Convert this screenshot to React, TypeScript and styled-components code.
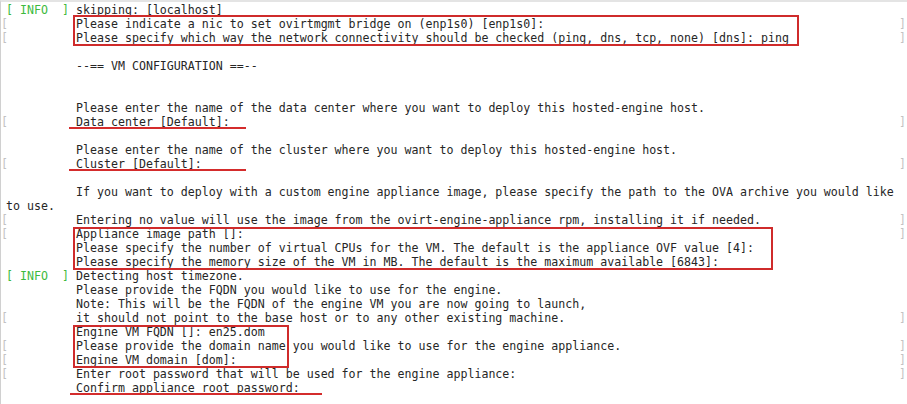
import React from 'react';
import styled, { createGlobalStyle } from 'styled-components';

const Global = createGlobalStyle`
  html, body { margin: 0; padding: 0; background: #ffffff; overflow: hidden; }
`;

const Terminal = styled.div`
  width: 907px;
  height: 404px;
  box-sizing: border-box;
  border-top: 2px solid #e4e4e4;
  border-left: 1px solid #d0d0d0;
  padding-top: 1px;
  background: #ffffff;
  font-family: "DejaVu Sans Mono", "Liberation Mono", monospace;
  font-size: 11.62px;
  line-height: 14px;
  color: #262626;
  overflow: hidden;
`;

const Row = styled.div`
  display: grid;
  grid-template-columns: 75px 823px 7px;
  height: 14px;
  white-space: pre;
`;

const Gutter = styled.span`
  grid-column: 1;
`;

const Info = styled.span`
  color: #3dba3d;
  padding-left: 5px;
`;

const Ghost = styled.span`
  color: #c2c2c2;
`;

const Text = styled.span<{ $full?: boolean }>`
  grid-column: ${(p) => (p.$full ? '1 / 3' : '2')};
  padding-left: ${(p) => (p.$full ? '5px' : '0')};
`;

const Tail = styled.span`
  grid-column: 3;
  color: #c2c2c2;
`;

const Framed = styled.div<{ $w: number; $top: number }>`
  position: relative;
  &::after {
    content: '';
    position: absolute;
    box-sizing: border-box;
    left: 72px;
    top: ${(p) => p.$top}px;
    bottom: -1px;
    width: ${(p) => p.$w}px;
    border: 2px solid #cf2b2b;
    pointer-events: none;
  }
`;

const Marked = styled.span<{ $w: number; $left: number }>`
  position: relative;
  display: inline-block;
  height: 14px;
  &::after {
    content: '';
    position: absolute;
    left: ${(p) => p.$left}px;
    bottom: 0;
    width: ${(p) => p.$w}px;
    height: 2px;
    background: #d42c2c;
  }
`;

type LineProps = {
  lead?: 'info' | 'ghost';
  tail?: boolean;
  full?: boolean;
  children?: React.ReactNode;
};

function Line({ lead, tail, full, children }: LineProps) {
  return (
    <Row>
      {!full && (
        <Gutter>
          {lead === 'info' && <Info>[ INFO  ]</Info>}
          {lead === 'ghost' && <Ghost>[</Ghost>}
        </Gutter>
      )}
      <Text $full={full}>{children}</Text>
      {tail && <Tail>]</Tail>}
    </Row>
  );
}

export default function App() {
  return (
    <>
      <Global />
      <Terminal>
        <Line lead="info">skipping: [localhost]</Line>
        <Framed $w={726} $top={-2}>
          <Line lead="ghost" tail>
            Please indicate a nic to set ovirtmgmt bridge on (enp1s0) [enp1s0]:
          </Line>
          <Line lead="ghost" tail>
            Please specify which way the network connectivity should be checked (ping, dns, tcp, none) [dns]: ping
          </Line>
        </Framed>
        <Line />
        <Line>--== VM CONFIGURATION ==--</Line>
        <Line />
        <Line />
        <Line>Please enter the name of the data center where you want to deploy this hosted-engine host.</Line>
        <Line lead="ghost" tail>
          <Marked $w={177} $left={-7}>Data center [Default]:</Marked>
        </Line>
        <Line />
        <Line>Please enter the name of the cluster where you want to deploy this hosted-engine host.</Line>
        <Line lead="ghost" tail>
          <Marked $w={177} $left={-7}>Cluster [Default]:</Marked>
        </Line>
        <Line />
        <Line>
          If you want to deploy with a custom engine appliance image, please specify the path to the OVA archive you would like
        </Line>
        <Line full>to use.</Line>
        <Line lead="ghost" tail>
          Entering no value will use the image from the ovirt-engine-appliance rpm, installing it if needed.
        </Line>
        <Framed $w={700} $top={0}>
          <Line lead="ghost" tail>
            Appliance image path []:
          </Line>
          <Line>Please specify the number of virtual CPUs for the VM. The default is the appliance OVF value [4]:</Line>
          <Line>Please specify the memory size of the VM in MB. The default is the maximum available [6843]:</Line>
        </Framed>
        <Line lead="info">Detecting host timezone.</Line>
        <Line>Please provide the FQDN you would like to use for the engine.</Line>
        <Line>Note: This will be the FQDN of the engine VM you are now going to launch,</Line>
        <Line lead="ghost" tail>
          it should not point to the base host or to any other existing machine.
        </Line>
        <Framed $w={216} $top={0}>
          <Line>Engine VM FQDN []: en25.dom</Line>
          <Line lead="ghost" tail>
            Please provide the domain name you would like to use for the engine appliance.
          </Line>
          <Line lead="ghost" tail>
            Engine VM domain [dom]:
          </Line>
        </Framed>
        <Line lead="ghost" tail>
          Enter root password that will be used for the engine appliance:
        </Line>
        <Line>
          <Marked $w={252} $left={-6}>Confirm appliance root password:</Marked>
        </Line>
      </Terminal>
    </>
  );
}
